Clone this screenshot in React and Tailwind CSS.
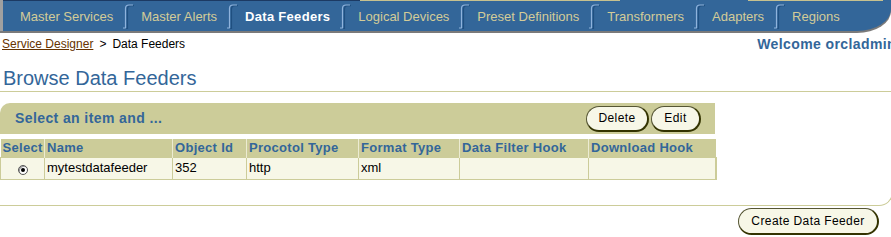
import React from 'react';

const tabs = [
  'Master Services',
  'Master Alerts',
  'Data Feeders',
  'Logical Devices',
  'Preset Definitions',
  'Transformers',
  'Adapters',
  'Regions',
];

const columns = [
  { label: 'Select', w: 'w-[44px]' },
  { label: 'Name', w: 'w-[128px]' },
  { label: 'Object Id', w: 'w-[74px]' },
  { label: 'Procotol Type', w: 'w-[112px]' },
  { label: 'Format Type', w: 'w-[101px]' },
  { label: 'Data Filter Hook', w: 'w-[129px]' },
  { label: 'Download Hook', w: 'w-[127px]' },
];

const TabSeparator = () => (
  <svg width="11" height="25" viewBox="0 0 11 25" className="ml-[10px] mr-[7px] shrink-0">
    <path d="M1 24 H3.5 V4.5 Q3.5 1 7 1 H11" fill="none" stroke="#1f4f80" strokeWidth="1.2" transform="translate(1,0.6)" />
    <path d="M0 24 H2.5 V4.5 Q2.5 1 6 1 H10" fill="none" stroke="#8fb3dc" strokeWidth="1.2" />
  </svg>
);

const PillButton = ({ children, className = '' }) => (
  <button
    className={`rounded-full bg-[#f7f7e7] border border-[#555533] border-r-2 border-b-2 border-r-[#333300] border-b-[#333300] text-[12px] tracking-[0.4px] text-black ${className}`}
  >
    {children}
  </button>
);

const Radio = () => (
  <span className="inline-flex w-[10px] h-[10px] rounded-full bg-white border border-[#555] items-center justify-center shadow-[inset_1px_1px_0_#999]">
    <span className="w-[4px] h-[4px] rounded-full bg-black" />
  </span>
);

export default function App() {
  return (
    <div className="w-[891px] h-[237px] overflow-hidden bg-white font-['Liberation_Sans',Arial,sans-serif]">
      {/* tab bar */}
      <div className="h-[31px] bg-[#336699] border-l-[3px] border-[#a0a0a0] rounded-br-[34px_22px] shadow-[0_2px_0_#7a7a7a] flex flex-col">
        <div className="flex h-[1px]">
          <div className="w-[357px] bg-[#1c3a63]" />
          <div className="w-[260px] bg-[#c7c18f]" />
          <div className="w-[128px]" />
          <div className="w-[135px] bg-[#c7c18f]" />
        </div>
        <div className="flex-1 flex items-center pl-[17px] pt-[1px] text-[13px] whitespace-nowrap">
          {tabs.map((t, i) => (
            <React.Fragment key={t}>
              {i > 0 && <TabSeparator />}
              <span className={t === 'Data Feeders' ? 'font-bold text-white tracking-[0.3px]' : 'text-[#d3cc98]'}>{t}</span>
            </React.Fragment>
          ))}
        </div>
      </div>

      {/* breadcrumb */}
      <div className="mt-[5px] h-[16px] flex items-center pl-[2px] text-[12px] whitespace-nowrap">
        <a className="text-[#663300] underline">Service Designer</a>
        <span className="mx-[6px] text-black">&gt;</span>
        <span className="text-black">Data Feeders</span>
        <span className="ml-auto mr-[-5px] font-bold text-[14px] tracking-[0.4px] text-[#336699]">Welcome orcladmin</span>
      </div>

      {/* heading */}
      <div className="h-[40px] flex items-end pb-[1px] pl-[3px] border-b border-[#cccc99]">
        <h1 className="text-[20px] leading-[23px] text-[#336699]">Browse Data Feeders</h1>
      </div>

      {/* content box */}
      <div className="w-[893px] pt-[11px] pb-[25px] border-r border-b border-[#cccc99] rounded-br-[14px]">
        <div className="w-[715px] h-[31px] bg-[#cccc99] rounded-tl-[10px] flex items-center justify-between pl-[15px] pr-[14px]">
          <span className="font-bold text-[14px] tracking-[0.4px] text-[#336699]">Select an item and ...</span>
          <div className="flex gap-[2px]">
            <PillButton className="w-[63px] h-[26px]">Delete</PillButton>
            <PillButton className="w-[50px] h-[26px]">Edit</PillButton>
          </div>
        </div>

        <table className="mt-[5px] w-[715px] table-fixed border-collapse text-[13px]">
          <thead>
            <tr className="h-[18px] bg-[#cccc99]">
              {columns.map((c, i) => (
                <th
                  key={c.label}
                  className={`${c.w} p-0 pl-[2px] text-left font-bold tracking-[0.3px] text-[#336699] leading-[17px] whitespace-nowrap ${i > 0 ? 'border-l border-[#ecebd2]' : ''}`}
                >
                  {c.label}
                </th>
              ))}
            </tr>
          </thead>
          <tbody>
            <tr className="h-[22px] bg-[#f7f7e7] text-black">
              <td className="border border-[#cccc99] text-center p-0">
                <Radio />
              </td>
              <td className="border border-[#cccc99] pl-[2px] p-0">mytestdatafeeder</td>
              <td className="border border-[#cccc99] pl-[2px] p-0">352</td>
              <td className="border border-[#cccc99] pl-[2px] p-0">http</td>
              <td className="border border-[#cccc99] pl-[2px] p-0">xml</td>
              <td className="border border-[#cccc99] p-0"></td>
              <td className="border border-[#cccc99] border-r-2 p-0"></td>
            </tr>
          </tbody>
        </table>
      </div>

      <div className="flex justify-end pr-[12px] mt-[2px]">
        <PillButton className="w-[141px] h-[27px]">Create Data Feeder</PillButton>
      </div>
    </div>
  );
}
